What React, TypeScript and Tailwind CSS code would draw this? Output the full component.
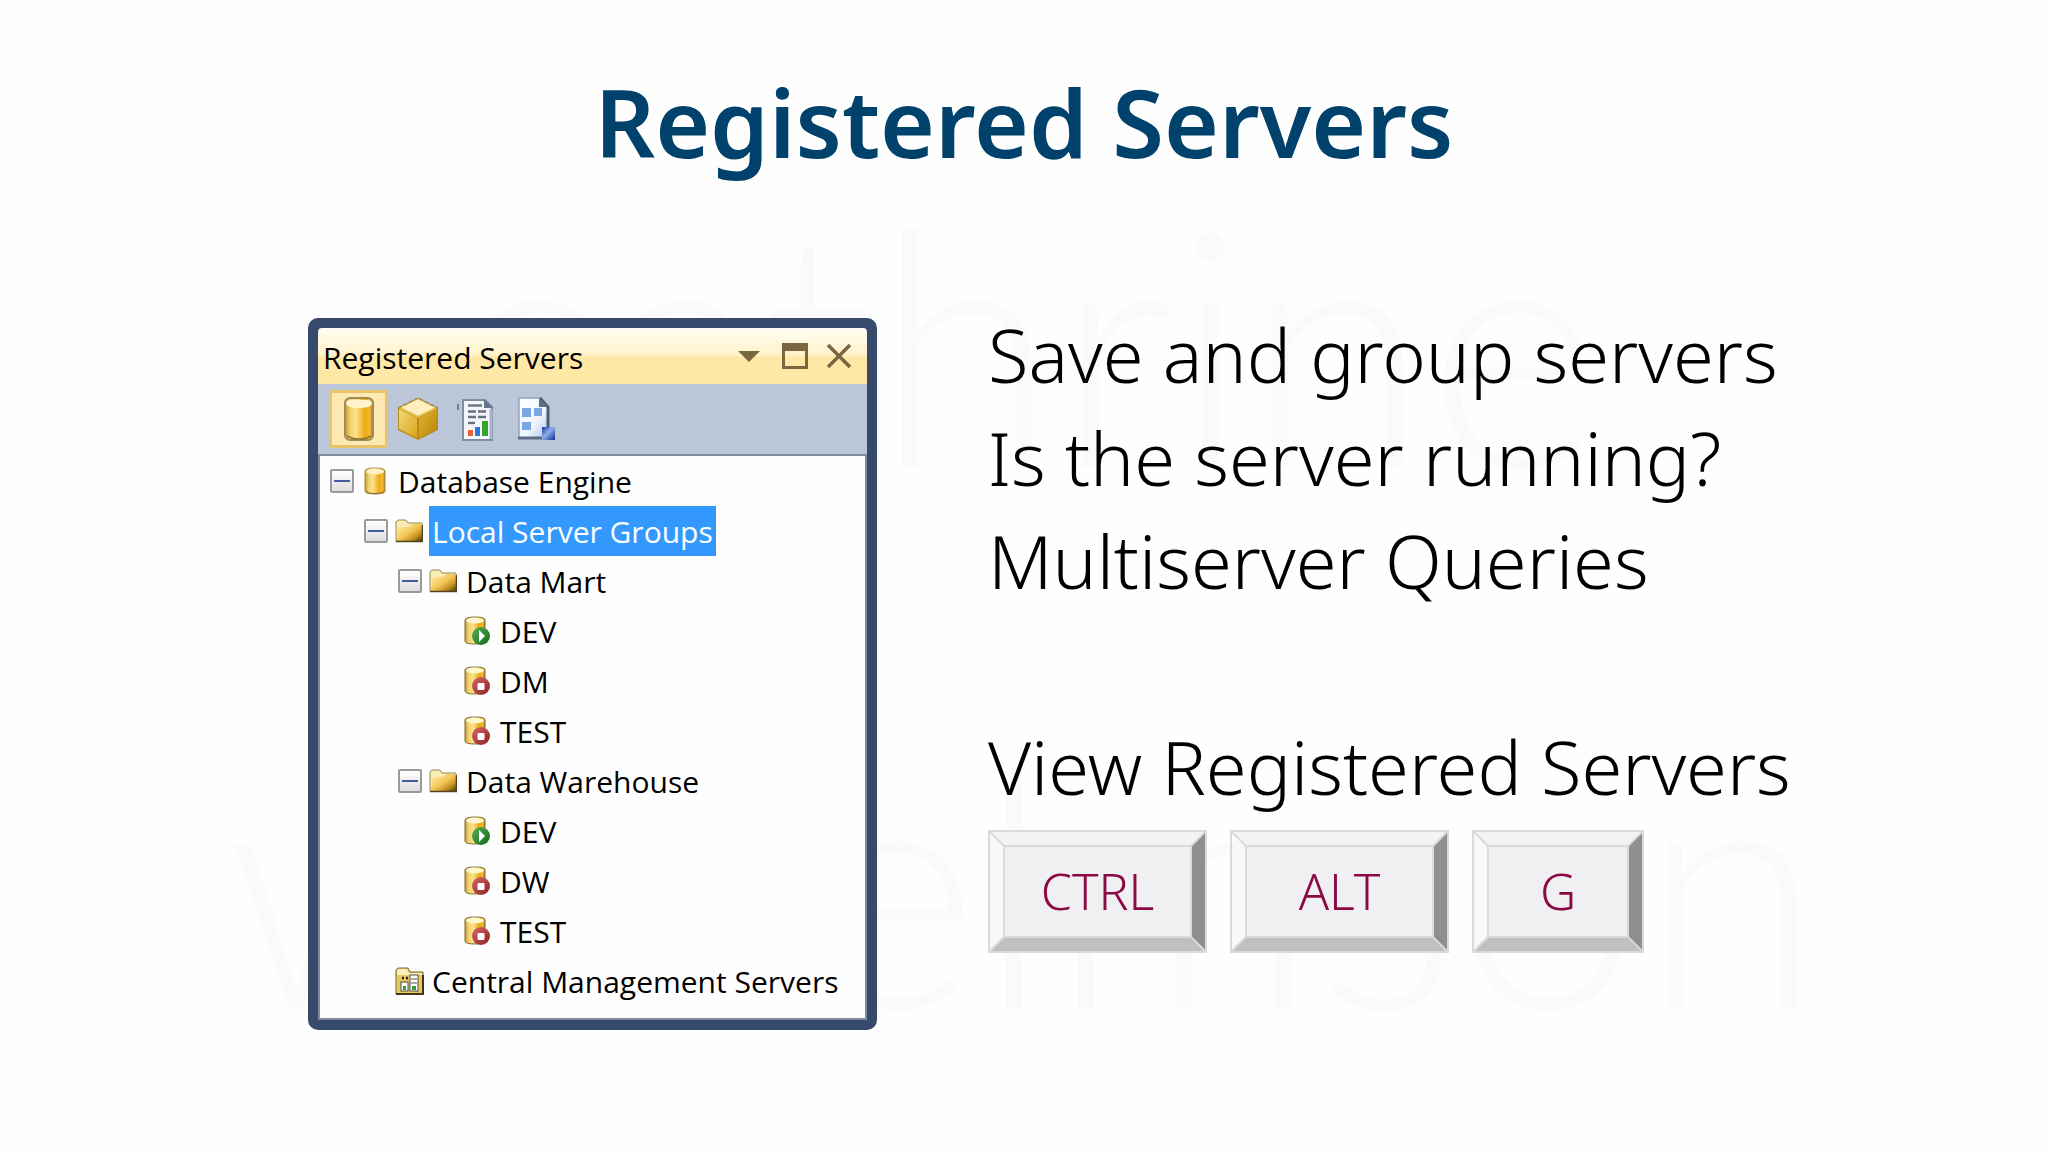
import React from "react";

function Defs() {
  return (
    <svg width="0" height="0" className="absolute" aria-hidden="true">
      <defs>
        <linearGradient id="gold" x1="0" x2="1" y1="0" y2="0">
          <stop offset="0" stopColor="#c99a2c" />
          <stop offset="0.18" stopColor="#f0d272" />
          <stop offset="0.4" stopColor="#fbe38a" />
          <stop offset="0.7" stopColor="#eda818" />
          <stop offset="0.88" stopColor="#f3b92e" />
          <stop offset="1" stopColor="#a9822f" />
        </linearGradient>
        <linearGradient id="folder" x1="0" x2="1" y1="0" y2="1">
          <stop offset="0" stopColor="#fff0b4" />
          <stop offset="0.5" stopColor="#f3c554" />
          <stop offset="0.75" stopColor="#c58f22" />
          <stop offset="1" stopColor="#4d3d12" />
        </linearGradient>
        <linearGradient id="cubeLeft" x1="0" x2="1" y1="0" y2="1">
          <stop offset="0" stopColor="#f3d978" />
          <stop offset="1" stopColor="#d9a51c" />
        </linearGradient>
        <linearGradient id="cubeRight" x1="0" x2="1" y1="0" y2="1">
          <stop offset="0" stopColor="#e3b32c" />
          <stop offset="1" stopColor="#b8860f" />
        </linearGradient>
        <linearGradient id="sheet" x1="0" x2="1" y1="0" y2="1">
          <stop offset="0" stopColor="#ffffff" />
          <stop offset="0.6" stopColor="#eef4fd" />
          <stop offset="1" stopColor="#a9c6ee" />
        </linearGradient>
        <linearGradient id="blueBox" x1="0" x2="1" y1="0" y2="1">
          <stop offset="0" stopColor="#16389c" />
          <stop offset="0.45" stopColor="#8fb0ea" />
          <stop offset="1" stopColor="#0d2f94" />
        </linearGradient>
        <linearGradient id="red" x1="0" x2="1" y1="0" y2="1">
          <stop offset="0" stopColor="#d4686a" />
          <stop offset="1" stopColor="#8f1f24" />
        </linearGradient>
        <linearGradient id="green" x1="0" x2="1" y1="0" y2="1">
          <stop offset="0" stopColor="#5cae58" />
          <stop offset="1" stopColor="#126a1b" />
        </linearGradient>
      </defs>
    </svg>
  );
}

function BigCylinder() {
  return (
    <svg width="30" height="44" viewBox="0 0 30 44" aria-hidden="true">
      <rect x="1" y="1" width="28" height="42" rx="5" fill="url(#gold)" stroke="#a08a55" strokeWidth="2" />
      <path d="M2 7 Q2 3 7 3 H23 Q28 3 28 7 Q26 11 15 11 Q4 11 2 7Z" fill="#fff4cc" />
      <path d="M3 39 Q8 42 15 42 Q22 42 27 39" fill="none" stroke="#8f7432" strokeWidth="1.5" />
    </svg>
  );
}

function Cube() {
  return (
    <svg width="42" height="44" viewBox="0 0 42 44" aria-hidden="true">
      <path d="M21 1 L41 11 V33 L21 43 L1 33 V11Z" fill="#b8891b" />
      <path d="M21 2 L39 11 L21 20 L3 11Z" fill="#fdf0bd" />
      <path d="M2 12 L20 21 V41 L2 32Z" fill="url(#cubeLeft)" />
      <path d="M40 12 L22 21 V41 L40 32Z" fill="url(#cubeRight)" />
      <path d="M3 11 L21 20 L39 11" fill="none" stroke="#e2bd4d" strokeWidth="2" />
      <path d="M1 11 L21 1 L41 11" fill="none" stroke="#a98c45" strokeWidth="1.5" strokeDasharray="4 2" />
    </svg>
  );
}

function Report() {
  return (
    <svg width="40" height="44" viewBox="0 0 40 44" aria-hidden="true">
      <path d="M1 7 V13" stroke="#6f7c92" strokeWidth="2" />
      <path d="M6 3 H28 L35 10 V43 H6Z" fill="#f4f6fb" stroke="#7f8da6" strokeWidth="2" />
      <path d="M27 2 L36 11 H27Z" fill="#66758c" />
      <path d="M34 12 V42" stroke="#a9b5c8" strokeWidth="3" />
      <g stroke="#6b7180" strokeWidth="2.4">
        <path d="M11 8.5 H25" />
        <path d="M11 14.5 H19 M21 14.5 H29" />
        <path d="M11 20 H19 M21 20 H29" />
        <path d="M11 26 H18" />
      </g>
      <rect x="11" y="33" width="5" height="6" fill="#ee5f35" />
      <rect x="18" y="30" width="5" height="9" fill="#2b78dc" />
      <rect x="25" y="24" width="6" height="15" fill="#34a42c" />
    </svg>
  );
}

function DesignSheet() {
  return (
    <svg width="40" height="44" viewBox="0 0 40 44" aria-hidden="true">
      <path d="M3 1 H24 L32 10 V41 H3Z" fill="url(#sheet)" />
      <path d="M3 41 V1 H24" fill="none" stroke="#8ea4c6" strokeWidth="1.5" />
      <path d="M24 1 L32 10 V33" fill="none" stroke="#4b5c73" strokeWidth="3" />
      <path d="M23 1 V10 H32Z" fill="#5e7086" />
      <path d="M2 41 H27" stroke="#5c6e88" strokeWidth="3" />
      <rect x="6" y="11" width="9" height="9" fill="#7aa7e3" />
      <rect x="18" y="11" width="8" height="8" fill="#7aa7e3" />
      <rect x="6" y="25" width="9" height="8" fill="#7aa7e3" />
      <rect x="26" y="30" width="13" height="13" fill="url(#blueBox)" />
    </svg>
  );
}

function SmallCylinder() {
  return (
    <svg width="22" height="28" viewBox="0 0 22 28" aria-hidden="true">
      <path d="M1 4 Q1 1 11 1 Q21 1 21 4 V24 Q21 27 11 27 Q1 27 1 24Z" fill="url(#gold)" stroke="#a88a41" />
      <ellipse cx="11" cy="4.5" rx="9" ry="3" fill="#fdf2c6" />
      <path d="M2 24 Q3 26.5 11 26.5 Q19 26.5 20 24" fill="none" stroke="#8a6c25" />
    </svg>
  );
}

function Folder() {
  return (
    <svg width="28" height="24" viewBox="0 0 28 24" aria-hidden="true">
      <path d="M1 22 V3 L3 1 H11 L13 4 H27 V22Z" fill="#f8ebb5" stroke="#97894f" />
      <path d="M2 22 L3 8 H14 L17 5 H27 V22Z" fill="url(#folder)" />
      <path d="M1 22.5 H27.5 V6" fill="none" stroke="#4e4220" strokeWidth="1.5" />
    </svg>
  );
}

function Server({ running }: { running: boolean }) {
  return (
    <svg width="26" height="30" viewBox="0 0 26 30" aria-hidden="true">
      <path d="M1 4 Q1 1 11 1 Q21 1 21 4 V25 Q21 28 11 28 Q1 28 1 25Z" fill="url(#gold)" stroke="#7d6b30" />
      <ellipse cx="11" cy="4.5" rx="9" ry="3" fill="#fdf6cf" />
      <circle cx="17" cy="20" r="9" fill={running ? "url(#green)" : "url(#red)"} />
      {running ? <path d="M15 14 L21 20 L15 26Z" fill="#fff" /> : <rect x="13.5" y="17" width="7" height="7" rx="1" fill="#fff" />}
    </svg>
  );
}

function ServerFolder() {
  return (
    <svg width="29" height="28" viewBox="0 0 29 28" aria-hidden="true">
      <path d="M1 27 V3 L3 1 H13 L15 5 H28 V27Z" fill="#e9c95c" stroke="#77683a" />
      <path d="M2 8 V3 L3 2 H12 L14 6 H27 V8Z" fill="#f9f0bd" />
      <path d="M1 27 H28 V8" fill="none" stroke="#3f3716" strokeWidth="2" />
      <rect x="6" y="15" width="7" height="9" fill="#fff" stroke="#4d4d4d" />
      <path d="M7 11 h2 M11 11 h2" stroke="#222" strokeWidth="2.5" />
      <rect x="15" y="8" width="8" height="16" fill="#fff" stroke="#4d4d4d" />
      <path d="M16 12 h6 M16 16 h6" stroke="#555" />
      <rect x="8" y="19" width="3" height="4" fill="#2f9d35" />
      <rect x="17" y="19" width="4" height="4" fill="#2f9d35" />
    </svg>
  );
}

type Node = {
  label: string;
  icon: React.ReactNode;
  selected?: boolean;
  children?: Node[];
};

const tree: Node = {
  label: "Database Engine",
  icon: <SmallCylinder />,
  children: [
    {
      label: "Local Server Groups",
      icon: <Folder />,
      selected: true,
      children: [
        {
          label: "Data Mart",
          icon: <Folder />,
          children: [
            { label: "DEV", icon: <Server running /> },
            { label: "DM", icon: <Server running={false} /> },
            { label: "TEST", icon: <Server running={false} /> },
          ],
        },
        {
          label: "Data Warehouse",
          icon: <Folder />,
          children: [
            { label: "DEV", icon: <Server running /> },
            { label: "DW", icon: <Server running={false} /> },
            { label: "TEST", icon: <Server running={false} /> },
          ],
        },
      ],
    },
    { label: "Central Management Servers", icon: <ServerFolder /> },
  ],
};

function TreeNode({ node }: { node: Node }) {
  return (
    <li role="treeitem" aria-selected={!!node.selected} aria-expanded={node.children ? true : undefined}>
      <div className="flex h-[50px] items-center">
        <span className="flex w-[30px] shrink-0">
          {node.children && (
            <button
              type="button"
              aria-label={`Collapse ${node.label}`}
              className="flex size-6 items-center justify-center rounded-[2px] border-2 border-[#9a9a9c] bg-linear-to-b from-white to-[#dedede]"
            >
              <span className="h-[2px] w-4 bg-[#4359a0]" />
            </button>
          )}
        </span>
        <span className="mr-[5px] flex w-[30px] shrink-0 items-center justify-center">{node.icon}</span>
        <span
          className={
            node.selected
              ? "flex h-full items-center whitespace-nowrap bg-[#3399ff] px-[3px] text-white"
              : "flex h-full items-center whitespace-nowrap px-[3px]"
          }
        >
          {node.label}
        </span>
      </div>
      {node.children && (
        <ul role="group" className="pl-[34px]">
          {node.children.map((child) => (
            <TreeNode key={child.label} node={child} />
          ))}
        </ul>
      )}
    </li>
  );
}

const tools = [
  { label: "Database Engine", icon: <BigCylinder />, active: true },
  { label: "Analysis Services", icon: <Cube />, active: false },
  { label: "Reporting Services", icon: <Report />, active: false },
  { label: "Integration Services", icon: <DesignSheet />, active: false },
];

function ServersWindow() {
  return (
    <section
      aria-label="Registered Servers"
      className="w-[569px] shrink-0 rounded-[10px] border-10 border-[#364a6c] bg-[#364a6c] font-['Open_Sans',sans-serif] text-[30px] text-black"
    >
      <header className="flex h-14 items-center rounded-t-[4px] bg-linear-to-b from-[#fffcf3] from-0% via-[#fff2cb] via-48% to-[#ffe8a6] to-52% pr-[15px] pl-[5px]">
        <h2 className="flex-1 pt-[2px] whitespace-nowrap">Registered Servers</h2>
        <div className="flex items-center gap-[18px] text-[#7a6640]">
          <button type="button" aria-label="Window options" className="pr-1">
            <svg width="22" height="11" viewBox="0 0 22 11" aria-hidden="true">
              <path d="M0 0 H22 L11 11Z" fill="currentColor" />
            </svg>
          </button>
          <button type="button" aria-label="Maximize">
            <svg width="26" height="26" viewBox="0 0 26 26" aria-hidden="true">
              <path d="M1.5 1.5 H24.5 V24.5 H1.5Z" fill="none" stroke="currentColor" strokeWidth="3" />
              <path d="M0 0 H26 V8 H0Z" fill="currentColor" />
            </svg>
          </button>
          <button type="button" aria-label="Close">
            <svg width="26" height="24" viewBox="0 0 26 24" aria-hidden="true">
              <path d="M2 1 L24 23 M24 1 L2 23" stroke="currentColor" strokeWidth="3.5" />
            </svg>
          </button>
        </div>
      </header>
      <div role="toolbar" aria-label="Server types" className="flex h-[70px] items-start bg-[#bcc6d9] pt-[6px] pl-[11px]">
        {tools.map((tool) => (
          <button
            key={tool.label}
            type="button"
            aria-label={tool.label}
            aria-pressed={tool.active}
            className={
              tool.active
                ? "flex h-[58px] w-[59px] items-center justify-center border-3 border-[#e9c36b] bg-[#ffe9b3]"
                : "flex h-[58px] w-[59px] items-center justify-center"
            }
          >
            {tool.icon}
          </button>
        ))}
      </div>
      <ul role="tree" aria-label="Registered servers" className="border-2 border-[#7f8ba0] bg-[#fefefe] pb-3 pl-[10px]">
        <TreeNode node={tree} />
      </ul>
    </section>
  );
}

function Key({ label, wide }: { label: string; wide: boolean }) {
  return (
    <kbd
      className={
        wide
          ? "relative block h-[123px] w-[219px] border-2 border-[#dad9dc] font-['Noto_Sans',sans-serif] text-[50px] font-light text-[#8b0a46]"
          : "relative block h-[123px] w-[172px] border-2 border-[#dad9dc] font-['Noto_Sans',sans-serif] text-[50px] font-light text-[#8b0a46]"
      }
    >
      <span className="block size-full border-[13px] border-t-[#f3f3f5] border-r-[#8f8e91] border-b-[#c0bfc2] border-l-[#f9f9fb]">
        <span className="flex size-full items-center justify-center border-2 border-[#dad9dc] bg-[#f0eff2]">{label}</span>
      </span>
      <svg className="absolute inset-0 size-full overflow-visible" aria-hidden="true" stroke="#dad9dc" strokeWidth="2">
        <path d="M0 0 L14 14" />
        <svg x="100%" overflow="visible">
          <path d="M0 0 L-14 14" />
        </svg>
        <svg y="100%" overflow="visible">
          <path d="M0 0 L14 -14" />
        </svg>
        <svg x="100%" y="100%" overflow="visible">
          <path d="M0 0 L-14 -14" />
        </svg>
      </svg>
    </kbd>
  );
}

export default function App() {
  return (
    <div className="relative isolate min-h-screen overflow-hidden bg-[#fefefe]">
      <Defs />
      <div
        aria-hidden="true"
        className="absolute inset-0 -z-10 flex flex-col items-center pt-[70px] font-['Lato',sans-serif] text-[330px] leading-[540px] font-light text-[#faf9fb] select-none"
      >
        <span>cathrine</span>
        <span>wilhelmson</span>
      </div>
      <h1 className="pt-[58px] text-center font-['Noto_Sans',sans-serif] text-[94px] leading-[128px] font-semibold text-[#00426b]">
        Registered Servers
      </h1>
      <main className="flex items-start gap-[111px] pt-[117px] pl-77">
        <div className="pt-[15px]">
          <ServersWindow />
        </div>
        <div className="font-['Noto_Sans',sans-serif] text-[74px] leading-[103px] font-light whitespace-nowrap text-black">
          <p>Save and group servers</p>
          <p>Is the server running?</p>
          <p>Multiserver Queries</p>
          <p className="pt-[103px]">View Registered Servers</p>
          <div className="flex gap-[23px] pt-3">
            <Key label="CTRL" wide />
            <Key label="ALT" wide />
            <Key label="G" wide={false} />
          </div>
        </div>
      </main>
    </div>
  );
}
